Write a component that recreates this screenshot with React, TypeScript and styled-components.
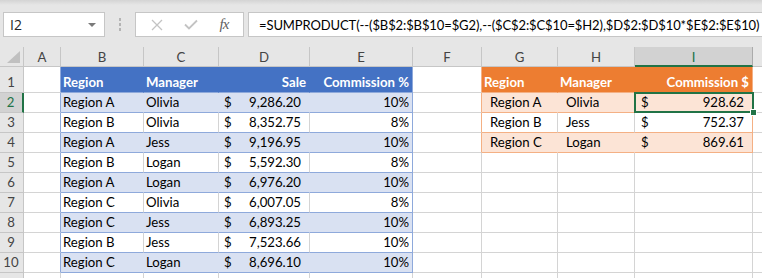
import React from "react";
import styled, { createGlobalStyle } from "styled-components";

const GlobalStyle = createGlobalStyle`
  html, body {
    margin: 0;
    padding: 0;
    background: #ffffff;
    overflow: hidden;
  }
  body {
    font-family: "Lato", "Liberation Sans", sans-serif;
  }
`;

const GRID = "#d4d4d4";
const HEAD_LINE = "#c6c6c6";
const GREEN = "#217346";

const Page = styled.div`
  width: 762px;
  height: 278px;
  overflow: hidden;
  background: #ffffff;
`;

// ---------- formula bar ----------
const FormulaBar = styled.div`
  height: 47px;
  box-sizing: border-box;
  padding: 12px 0 10px 3px;
  display: flex;
  align-items: stretch;
  background: linear-gradient(#d4d4d4 0px, #e6e6e6 5px, #e6e6e6 100%);
`;

const NameBox = styled.div`
  width: 102px;
  box-sizing: border-box;
  background: #ffffff;
  border: 1px solid ${HEAD_LINE};
  display: flex;
  align-items: center;
  justify-content: space-between;
  padding: 0 6px 0 6px;
  font-family: "Open Sans", "Noto Sans", sans-serif;
  font-size: 14px;
  color: #262626;
`;

const DropArrow = styled.span`
  width: 0;
  height: 0;
  border-left: 4px solid transparent;
  border-right: 4px solid transparent;
  border-top: 4px solid #7a7a7a;
  margin-right: 2px;
`;

const Grip = styled.div`
  width: 30px;
  display: flex;
  flex-direction: column;
  align-items: center;
  justify-content: center;
  gap: 2px;

  & span {
    width: 2px;
    height: 3px;
    background: #b4b4b4;
  }
`;

const ButtonBox = styled.div`
  width: 109px;
  box-sizing: border-box;
  background: #ffffff;
  border: 1px solid ${HEAD_LINE};
  display: flex;
  align-items: center;
  justify-content: space-around;
  padding: 0 4px;
`;

const Fx = styled.span`
  font-family: "Liberation Serif", "DejaVu Serif", serif;
  font-style: italic;
  font-size: 15px;
  color: #5f5f5f;
  letter-spacing: -1px;
`;

const FormulaInput = styled.div`
  flex: 1;
  margin-left: 4px;
  margin-right: -4px;
  box-sizing: border-box;
  background: #ffffff;
  border: 1px solid ${HEAD_LINE};
  display: flex;
  align-items: center;
  padding-left: 10px;
  white-space: nowrap;
  overflow: hidden;
  font-size: 13px;
  letter-spacing: -0.1px;
  color: #000000;
`;

// ---------- sheet ----------
const Sheet = styled.div`
  display: grid;
  grid-template-columns: 24px 37px 83px 75px 91px 103px 69px 76px 77px 118px 64px;
  grid-template-rows: 20px 26px repeat(9, 20px) 20px;
  font-size: 13.2px;
  overflow: hidden;
`;

const Corner = styled.div`
  background: #e6e6e6;
  border-right: 1px solid ${HEAD_LINE};
  border-bottom: 1px solid ${HEAD_LINE};
  display: flex;
  align-items: flex-end;
  justify-content: flex-end;
  padding: 0 3px 3px 0;
`;

const ColHeader = styled.div<{ $active?: boolean }>`
  background: ${(p) => (p.$active ? "#d2d2d2" : "#e6e6e6")};
  border-right: 1px solid ${(p) => (p.$active ? "#ababab" : HEAD_LINE)};
  border-bottom: ${(p) => (p.$active ? `2px solid ${GREEN}` : `1px solid ${HEAD_LINE}`)};
  box-sizing: border-box;
  display: flex;
  align-items: center;
  justify-content: center;
  color: ${(p) => (p.$active ? GREEN : "#444444")};
  padding-top: 1px;
`;

const RowHeader = styled.div<{ $active?: boolean }>`
  background: ${(p) => (p.$active ? "#d2d2d2" : "#e6e6e6")};
  border-right: ${(p) => (p.$active ? `2px solid ${GREEN}` : `1px solid ${HEAD_LINE}`)};
  border-bottom: 1px solid ${HEAD_LINE};
  box-sizing: border-box;
  display: flex;
  align-items: flex-end;
  justify-content: center;
  padding-bottom: 1px;
  padding-right: 1px;
  line-height: 18px;
  color: ${(p) => (p.$active ? GREEN : "#444444")};
`;

const Cell = styled.div<{
  $fill: string;
  $right: string;
  $bottom: string;
  $align?: "left" | "right";
  $head?: boolean;
  $indent?: number;
}>`
  position: relative;
  box-sizing: border-box;
  background: ${(p) => p.$fill};
  border-right: 1px solid ${(p) => p.$right};
  border-bottom: 1px solid ${(p) => p.$bottom};
  display: flex;
  align-items: flex-end;
  justify-content: ${(p) => (p.$align === "right" ? "flex-end" : "flex-start")};
  padding: 0 ${(p) => (p.$align === "right" ? 3 : 2)}px 1px ${(p) => p.$indent ?? 2}px;
  line-height: 18px;
  white-space: nowrap;
  color: ${(p) => (p.$head ? "#ffffff" : "#000000")};
  font-weight: ${(p) => (p.$head ? 700 : 400)};
`;

const Money = styled.div<{ $left: number; $right: number }>`
  flex: 1;
  display: flex;
  justify-content: space-between;
  padding: 0 ${(p) => p.$right}px 0 ${(p) => p.$left}px;
`;

const Selection = styled.div`
  position: absolute;
  top: -1px;
  left: -1px;
  right: -2px;
  bottom: -1px;
  border: 2px solid ${GREEN};
  z-index: 2;
  pointer-events: none;
`;

const Handle = styled.div`
  position: absolute;
  right: -5px;
  bottom: -5px;
  width: 5px;
  height: 5px;
  background: ${GREEN};
  border: 1px solid #ffffff;
`;

const cols = ["A", "B", "C", "D", "E", "F", "G", "H", "I", "J"];

const sales = [
  ["Region A", "Olivia", "9,286.20", "10%"],
  ["Region B", "Olivia", "8,352.75", "8%"],
  ["Region A", "Jess", "9,196.95", "10%"],
  ["Region B", "Logan", "5,592.30", "8%"],
  ["Region A", "Logan", "6,976.20", "10%"],
  ["Region C", "Olivia", "6,007.05", "8%"],
  ["Region C", "Jess", "6,893.25", "10%"],
  ["Region B", "Jess", "7,523.66", "10%"],
  ["Region C", "Logan", "8,696.10", "10%"],
];

const summary = [
  ["Region A", "Olivia", "928.62"],
  ["Region B", "Jess", "752.37"],
  ["Region C", "Logan", "869.61"],
];

type Tbl = { c1: number; c2: number; r2: number; head: string; band: string; line: string };
const blue: Tbl = { c1: 2, c2: 5, r2: 10, head: "#4472c4", band: "#d9e1f2", line: "#8ea9db" };
const orange: Tbl = { c1: 7, c2: 9, r2: 4, head: "#ed7d31", band: "#fce4d6", line: "#f4b084" };

const tableAt = (r: number, c: number) =>
  [blue, orange].find((t) => r >= 1 && r <= t.r2 && c >= t.c1 && c <= t.c2);

function cellLook(r: number, c: number) {
  const t = tableAt(r, c);
  if (!t) {
    const next = tableAt(r, c + 1);
    return { fill: "#ffffff", right: next && next.c1 === c + 1 ? next.line : GRID, bottom: GRID };
  }
  const fill = r === 1 ? t.head : r % 2 === 0 ? t.band : "#ffffff";
  const right = c === t.c2 ? t.line : fill === "#ffffff" ? GRID : fill;
  return { fill, right, bottom: t.line };
}

function content(r: number, c: number): React.ReactNode {
  if (r === 1) {
    const heads: Record<number, string> = {
      2: "Region",
      3: "Manager",
      4: "Sale",
      5: "Commission %",
      7: "Region",
      8: "Manager",
      9: "Commission $",
    };
    return heads[c] ?? null;
  }
  const s = sales[r - 2];
  if (s && c >= 2 && c <= 5) {
    if (c === 4)
      return (
        <Money $left={3} $right={6}>
          <span>$</span>
          <span>{s[2]}</span>
        </Money>
      );
    return s[c === 5 ? 3 : c - 2];
  }
  const m = summary[r - 2];
  if (m && c >= 7 && c <= 9) {
    if (c === 9)
      return (
        <Money $left={4} $right={6}>
          <span>$</span>
          <span>{m[2]}</span>
        </Money>
      );
    return m[c - 7];
  }
  return null;
}

const XIcon = () => (
  <svg width="12" height="12" viewBox="0 0 12 12">
    <path d="M1 1 L11 11 M11 1 L1 11" stroke="#c3c3c3" strokeWidth="1.3" fill="none" />
  </svg>
);

const CheckIcon = () => (
  <svg width="14" height="11" viewBox="0 0 14 11">
    <path d="M1 5.5 L5 9.5 L13 1.5" stroke="#c3c3c3" strokeWidth="1.8" fill="none" />
  </svg>
);

const SelectAll = () => (
  <svg width="13" height="12" viewBox="0 0 13 12">
    <polygon points="13,0 13,12 0,12" fill="#c0c0c0" />
  </svg>
);

export default function App() {
  const rows = Array.from({ length: 11 }, (_, i) => i + 1);

  return (
    <Page>
      <GlobalStyle />
      <FormulaBar>
        <NameBox>
          I2
          <DropArrow />
        </NameBox>
        <Grip>
          <span />
          <span />
          <span />
        </Grip>
        <ButtonBox>
          <XIcon />
          <CheckIcon />
          <Fx>fx</Fx>
        </ButtonBox>
        <FormulaInput>
          =SUMPRODUCT(--($B$2:$B$10=$G2),--($C$2:$C$10=$H2),$D$2:$D$10*$E$2:$E$10)
        </FormulaInput>
      </FormulaBar>

      <Sheet>
        <Corner>
          <SelectAll />
        </Corner>
        {/* column J is cut by the window edge, so its letter is out of view */}
        {cols.map((c) => (
          <ColHeader key={c} $active={c === "I"}>
            {c !== "J" ? c : null}
          </ColHeader>
        ))}

        {rows.map((r) => (
          <React.Fragment key={r}>
            {/* row 11 is only a sliver at the bottom edge, its number sits below the fold */}
            <RowHeader $active={r === 2}>{r <= 10 ? r : null}</RowHeader>
            {cols.map((_, i) => {
              const c = i + 1;
              const look = cellLook(r, c);
              const t = tableAt(r, c);
              const right = r === 1 ? c === 4 || c === 5 || c === 9 : r > 1 && c === 5;
              return (
                <Cell
                  key={c}
                  $fill={look.fill}
                  $right={look.right}
                  $bottom={look.bottom}
                  $align={right ? "right" : "left"}
                  $head={r === 1 && !!t}
                  $indent={t === orange && r > 1 && c < 9 ? 8 : 2}
                >
                  {content(r, c)}
                  {r === 2 && c === 9 && (
                    <Selection>
                      <Handle />
                    </Selection>
                  )}
                </Cell>
              );
            })}
          </React.Fragment>
        ))}
      </Sheet>
    </Page>
  );
}
